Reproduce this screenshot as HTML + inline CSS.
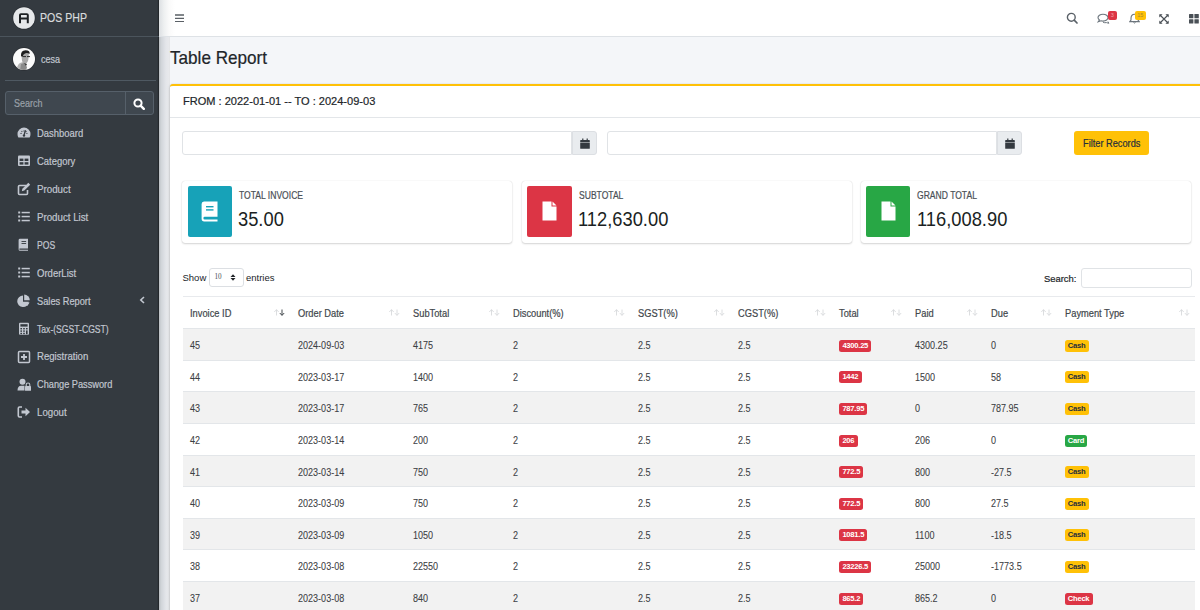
<!DOCTYPE html>
<html><head><meta charset="utf-8">
<style>
*{box-sizing:border-box;margin:0;padding:0}
html,body{width:1200px;height:610px;overflow:hidden;background:#f4f6f9;font-family:"Liberation Sans",sans-serif;color:#212529}
.abs{position:absolute}
.sx{display:inline-block;transform-origin:0 50%;white-space:nowrap;-webkit-text-stroke:.2px currentColor}
#sidebar{position:absolute;left:0;top:0;width:159px;height:610px;background:#343a40;z-index:5;box-shadow:inset -1.2px 0 0 #24282c}
#navbar{position:absolute;left:159px;top:0;width:1041px;height:37px;background:#fff;border-bottom:1px solid #dee2e6}
.brand{position:absolute;left:0;top:0;width:159px;height:37px;border-bottom:1px solid #4b545c}
.brand-text{position:absolute;left:39.5px;top:10.5px;font-size:12.6px;color:#d9dbdd}
.user{position:absolute;left:5px;top:37px;width:150.5px;height:44px;border-bottom:1px solid #4f5962}
.user-name{position:absolute;left:35.5px;top:15.5px;font-size:10.6px;color:#c2c7d0}
.nav .item{position:absolute;left:36.8px;font-size:10.6px;color:#c2c7d0;white-space:nowrap}
.nav svg{position:absolute}
.search{position:absolute;left:5px;top:91px;width:149px;height:23.5px;border:1px solid #56606a;border-radius:3px;background:#3f474f}
.search-in{position:absolute;left:7.5px;top:5px;font-size:10.6px;color:#9aa1a8}
.search-btn{position:absolute;left:119px;top:0;width:28px;height:22px;border-left:1px solid #56606a}
h1{position:absolute;left:170px;top:47px;font-size:18.5px;font-weight:400;color:#212529}
#card{position:absolute;left:170px;top:84px;width:1045px;height:540px;background:#fff;border-top:2.5px solid #ffc107;border-radius:3px;box-shadow:0 0 1px rgba(0,0,0,.125),0 1px 3px rgba(0,0,0,.2)}
#shade{position:absolute;left:159px;top:37px;width:11px;height:573px;background:linear-gradient(90deg,#b9bdc2 0,#d0d4d8 2px,#d8dbe0 4px,#e4e6ea 7px,#e8e9ec 10px,#e2e3e5 11px)}
#navshade{position:absolute;left:159px;top:0;width:16px;height:36px;background:linear-gradient(90deg,#dcdfe2,#eef0f1 5px,#fafafa 10px,#fff)}
.card-header{position:absolute;left:12.5px;top:8.7px;font-size:11.5px;color:#212529}
.hline{position:absolute;left:0;top:30.5px;width:100%;height:1px;background:#e3e6e9}
.inp{position:absolute;height:24px;background:#fff;border:1px solid #e0e3e6;border-radius:3px}
.addon{position:absolute;width:25.5px;height:24px;background:#e9ecef;border:1px solid #dcdfe3;border-radius:0 3px 3px 0}
.addon svg{position:absolute;left:7.5px;top:6px}
.btn{position:absolute;left:1074px;top:130.5px;width:75px;height:24.5px;background:#ffc107;border-radius:3px;font-size:10.2px;color:#1f2d3d;padding:7px 0 0 8.5px}
.ibox{position:absolute;top:180.5px;width:330px;height:62px;background:#fff;border-radius:3px;box-shadow:0 0 1px rgba(0,0,0,.18),0 1px 2px rgba(0,0,0,.16)}
.iicon{position:absolute;left:5.3px;top:5.3px;width:44.5px;height:51px;border-radius:2px}
.ilabel{position:absolute;left:56.5px;top:9.8px;font-size:10.2px;color:#4a5056}
.inum{position:absolute;left:56px;top:28.8px;font-size:19.3px;color:#1b1f23}
.dt-txt{position:absolute;font-size:9.5px;color:#212529}
.sel{position:absolute;left:208.5px;top:268.3px;width:35px;height:19px;border:1px solid #dcdfe3;border-radius:3px;background:#fff}
.th{position:absolute;font-size:10px;color:#42474c;white-space:nowrap}
.td{position:absolute;font-size:10.4px;color:#3c4044;white-space:nowrap}
.tr{position:absolute;left:182.5px;width:1012.5px;height:31.6px;border-top:1px solid #e3e6e9}
.badge{position:absolute;height:12px;padding:0 3.3px;border-radius:2.5px;font-size:7.6px;font-weight:700;line-height:12.2px;letter-spacing:-.25px;white-space:nowrap}
.badge-nav{font-size:5.5px;font-weight:400;text-align:center;line-height:9px;border-radius:2px}
</style></head><body>
<div id="sidebar">
  <div class="brand">
    <svg class="abs" style="left:12px;top:5.5px" width="24" height="24" viewBox="0 0 24 24">
      <circle cx="12" cy="12" r="11.6" fill="#24282d" opacity=".6"/>
      <circle cx="12" cy="12" r="10.8" fill="#e6e8ea"/>
      <path d="M7 17.3V9.1Q7 7.2 8.9 7.2H14.9Q16.8 7.2 16.8 9.1V17.3H14.8V13.4H9V17.3ZM9 11.6H14.8V9.1H9Z" fill="#1d2023"/>
    </svg>
    <div class="brand-text"><span class="sx" style="transform:scaleX(.84)">POS PHP</span></div>
  </div>
  <div class="user">
    <svg class="abs" style="left:7px;top:9.5px" width="24" height="24" viewBox="0 0 24 24">
      <defs><clipPath id="av"><circle cx="12" cy="12" r="11"/></clipPath></defs>
      <circle cx="12" cy="12" r="11.8" fill="#26292e" opacity=".7"/>
      <circle cx="12" cy="12" r="11" fill="#fbfbfb"/>
      <g clip-path="url(#av)">
        <path d="M4 24Q5 18 8 16L11 15L14 19L12 24Z" fill="#b5b5b5"/>
        <path d="M9.5 8Q9.5 4.5 13.5 4.5Q17 4.5 16.8 8.5L16.3 13Q15 17 12.5 17Q10 16 9.8 12Z" fill="#a8a8a8"/>
        <path d="M9 9Q8.5 3.5 13.5 3.2Q18.5 3.5 17.5 7Q15 5.5 13 6.5Q11 7 10.5 10Z" fill="#1e1e1e"/>
        <path d="M11 9.6H14M15 9.6H18" stroke="#2a2a2a" stroke-width="1"/>
        <path d="M8 24L9 17L12 16L15 20L14 24Z" fill="#8a8a8a"/>
        <path d="M12 16L14 19L15 17Z" fill="#333"/>
      </g>
    </svg>
    <div class="user-name"><span class="sx" style="transform:scaleX(.85)">cesa</span></div>
  </div>
  <div class="search">
    <div class="search-in"><span class="sx" style="transform:scaleX(.85)">Search</span></div>
    <div class="search-btn">
      <svg class="abs" style="left:7.3px;top:5.8px" width="12" height="12" viewBox="0 0 12 12"><circle cx="5" cy="5" r="3.6" fill="none" stroke="#fff" stroke-width="2"/><path d="M7.6 7.6L10.8 10.8" stroke="#fff" stroke-width="2.4" stroke-linecap="round"/></svg>
    </div>
  </div>
  <div class="nav">
    <svg style="left:17px;top:126.4px" width="14" height="14" viewBox="0 0 14 14"><path d="M7 1.5A6.5 6.5 0 0 0 0.5 8Q0.5 10 1.4 11.5H12.6Q13.5 10 13.5 8A6.5 6.5 0 0 0 7 1.5Z" fill="#c2c7d0"/><path d="M7 4.5V5.6M3.5 7.5H4.6M10.4 7.5H9.4M4.6 5.2L5.2 5.8M9.4 5.2L8.8 5.8" stroke="#343a40" stroke-width="1.1"/><path d="M8.5 4.2L7 9.2" stroke="#343a40" stroke-width="1.3"/><circle cx="7" cy="9.6" r="1.2" fill="#343a40"/></svg>
    <div class="item" style="top:127.2px"><span class="sx" style="transform:scaleX(0.890)">Dashboard</span></div>
    <svg style="left:17px;top:154.3px" width="14" height="14" viewBox="0 0 14 14"><rect x="1" y="1.5" width="12" height="10.5" rx="1" fill="#c2c7d0"/><rect x="2.6" y="4.6" width="3.8" height="2.4" fill="#343a40"/><rect x="7.6" y="4.6" width="3.8" height="2.4" fill="#343a40"/><rect x="2.6" y="8.2" width="3.8" height="2.4" fill="#343a40"/><rect x="7.6" y="8.2" width="3.8" height="2.4" fill="#343a40"/></svg>
    <div class="item" style="top:155.1px"><span class="sx" style="transform:scaleX(0.891)">Category</span></div>
    <svg style="left:17px;top:182.2px" width="14" height="14" viewBox="0 0 14 14"><path d="M9 3.5H2.5Q1.5 3.5 1.5 4.5V11.5Q1.5 12.5 2.5 12.5H9.5Q10.5 12.5 10.5 11.5V8" fill="none" stroke="#c2c7d0" stroke-width="1.6"/><path d="M11.3 0.8L13.2 2.7L7.3 8.6L4.8 9.2L5.4 6.7Z" fill="#c2c7d0"/></svg>
    <div class="item" style="top:183.0px"><span class="sx" style="transform:scaleX(0.921)">Product</span></div>
    <svg style="left:17px;top:210.1px" width="14" height="14" viewBox="0 0 14 14"><rect x="1.2" y="1.5" width="2" height="2" fill="#c2c7d0"/><rect x="1.2" y="5.5" width="2" height="2" fill="#c2c7d0"/><rect x="1.2" y="9.5" width="2" height="2" fill="#c2c7d0"/><rect x="4.6" y="1.8" width="8.2" height="1.5" fill="#c2c7d0"/><rect x="4.6" y="5.8" width="8.2" height="1.5" fill="#c2c7d0"/><rect x="4.6" y="9.8" width="8.2" height="1.5" fill="#c2c7d0"/></svg>
    <div class="item" style="top:210.9px"><span class="sx" style="transform:scaleX(0.916)">Product List</span></div>
    <svg style="left:17px;top:238.0px" width="14" height="14" viewBox="0 0 14 14"><path d="M3 0.8H11V10.4H3Q2.2 10.4 2.2 11.1Q2.2 11.8 3 11.8H11V12.8H3Q1.6 12.8 1.6 11.3V2.2Q1.6 0.8 3 0.8Z" fill="#c2c7d0"/><rect x="4.5" y="3" width="4.6" height=".9" fill="#343a40"/><rect x="4.5" y="5" width="4.6" height=".9" fill="#343a40"/></svg>
    <div class="item" style="top:238.8px"><span class="sx" style="transform:scaleX(0.812)">POS</span></div>
    <svg style="left:17px;top:265.9px" width="14" height="14" viewBox="0 0 14 14"><rect x="1.2" y="1.5" width="2" height="2" fill="#c2c7d0"/><rect x="1.2" y="5.5" width="2" height="2" fill="#c2c7d0"/><rect x="1.2" y="9.5" width="2" height="2" fill="#c2c7d0"/><rect x="4.6" y="1.8" width="8.2" height="1.5" fill="#c2c7d0"/><rect x="4.6" y="5.8" width="8.2" height="1.5" fill="#c2c7d0"/><rect x="4.6" y="9.8" width="8.2" height="1.5" fill="#c2c7d0"/></svg>
    <div class="item" style="top:266.7px"><span class="sx" style="transform:scaleX(0.900)">OrderList</span></div>
    <svg style="left:17px;top:293.8px" width="14" height="14" viewBox="0 0 14 14"><path d="M6 1.5A5.8 5.8 0 1 0 11.8 7.7H6Z" fill="#c2c7d0"/><path d="M7.2 0.5A5.8 5.8 0 0 1 12.8 6.2H7.2Z" fill="#c2c7d0"/><path d="M8 8.6H12.6L10.3 12Z" fill="#c2c7d0"/></svg>
    <div class="item" style="top:294.6px"><span class="sx" style="transform:scaleX(0.874)">Sales Report</span></div>
    <svg style="left:17px;top:321.7px" width="14" height="14" viewBox="0 0 14 14"><rect x="2" y="0.8" width="10" height="12" rx="1" fill="#c2c7d0"/><rect x="3.4" y="2.2" width="7.2" height="2.4" fill="#343a40"/><g fill="#343a40"><rect x="3.4" y="6" width="1.6" height="1.4"/><rect x="6.2" y="6" width="1.6" height="1.4"/><rect x="9" y="6" width="1.6" height="1.4"/><rect x="3.4" y="8.4" width="1.6" height="1.4"/><rect x="6.2" y="8.4" width="1.6" height="1.4"/><rect x="9" y="8.4" width="1.6" height="3.8"/><rect x="3.4" y="10.8" width="1.6" height="1.4"/><rect x="6.2" y="10.8" width="1.6" height="1.4"/></g></svg>
    <div class="item" style="top:322.5px"><span class="sx" style="transform:scaleX(0.812)">Tax-(SGST-CGST)</span></div>
    <svg style="left:17px;top:349.6px" width="14" height="14" viewBox="0 0 14 14"><rect x="1.5" y="1.5" width="11" height="11" rx="1" fill="none" stroke="#c2c7d0" stroke-width="1.5"/><path d="M7 4V10M4 7H10" stroke="#c2c7d0" stroke-width="1.8"/></svg>
    <div class="item" style="top:350.4px"><span class="sx" style="transform:scaleX(0.906)">Registration</span></div>
    <svg style="left:17px;top:377.5px" width="14" height="14" viewBox="0 0 14 14"><circle cx="5.5" cy="3.8" r="3" fill="#c2c7d0"/><path d="M0.5 12.5Q0.5 7.8 4.2 7.8H7.5V12.5Z" fill="#c2c7d0"/><rect x="8" y="8" width="6" height="4.8" rx=".6" fill="#c2c7d0"/><path d="M9.2 8.2V6.8Q9.2 5 11 5Q12.8 5 12.8 6.8V8.2" fill="none" stroke="#c2c7d0" stroke-width="1.1"/></svg>
    <div class="item" style="top:378.3px"><span class="sx" style="transform:scaleX(0.870)">Change Password</span></div>
    <svg style="left:17px;top:405.4px" width="14" height="14" viewBox="0 0 14 14"><path d="M5 2H2.5Q1.3 2 1.3 3.2V10.8Q1.3 12 2.5 12H5" fill="none" stroke="#c2c7d0" stroke-width="1.6"/><path d="M4.5 5.5H8.5V2.8L13 7L8.5 11.2V8.5H4.5Z" fill="#c2c7d0"/></svg>
    <div class="item" style="top:406.2px"><span class="sx" style="transform:scaleX(0.913)">Logout</span></div>
    <svg style="left:139px;top:296px" width="6" height="8" viewBox="0 0 6 8"><path d="M5 1L1.8 4L5 7" fill="none" stroke="#c2c7d0" stroke-width="1.6"/></svg>
  </div>
</div>
<div id="navbar">
  <svg class="abs" style="left:15.800000000000011px;top:14px" width="9" height="8" viewBox="0 0 9 8"><path d="M0 1H9M0 4.3H9M0 7.6H9" stroke="#5a6066" stroke-width="1.3"/></svg>
  <svg class="abs" style="left:907px;top:12px" width="12" height="12" viewBox="0 0 12 12"><circle cx="5.3" cy="5.3" r="3.9" fill="none" stroke="#5a6168" stroke-width="1.4"/><path d="M8.2 8.2L11 11" stroke="#5a6168" stroke-width="1.7" stroke-linecap="round"/></svg>
  <svg class="abs" style="left:938px;top:13px" width="13" height="11" viewBox="0 0 13 11"><path d="M6 1.2C3 1.2 1 2.8 1 4.6C1 5.6 1.6 6.4 2.4 7L1.2 8.8L4 7.8C4.6 8 5.3 8.1 6 8.1C9 8.1 11 6.5 11 4.6C11 2.8 9 1.2 6 1.2Z" fill="none" stroke="#6c757d" stroke-width="1.1"/><path d="M6 9.2Q7.5 10 9.5 9.6L11.8 10.3L11 8.6" fill="none" stroke="#6c757d" stroke-width="1"/></svg>
  <div class="abs badge-nav" style="left:949px;top:11px;width:8.5px;height:9px;background:#dc3545;color:#f0a0a8">3</div>
  <svg class="abs" style="left:970px;top:13px" width="11" height="11" viewBox="0 0 11 11"><path d="M5.5 1.2C3.2 1.2 2 3 2 5.2V7L0.8 8.6H10.2L9 7V5.2C9 3 7.8 1.2 5.5 1.2Z" fill="none" stroke="#6c757d" stroke-width="1.1"/><path d="M4.5 9.4Q5.5 10.6 6.5 9.4" stroke="#6c757d" stroke-width="1" fill="none"/></svg>
  <div class="abs badge-nav" style="left:975.5px;top:11px;width:11.5px;height:9px;background:#ffc107;color:#a88a30">15</div>
  <svg class="abs" style="left:999.5px;top:13.5px" width="10" height="10" viewBox="0 0 10 10"><path d="M1 1L9 9M9 1L1 9" stroke="#4a5056" stroke-width="1.1"/><path d="M0.3 0.3H3.6L0.3 3.6ZM9.7 0.3H6.4L9.7 3.6ZM0.3 9.7H3.6L0.3 6.4ZM9.7 9.7H6.4L9.7 6.4Z" fill="#4a5056"/></svg>
  <svg class="abs" style="left:1029.5px;top:14px" width="12" height="10" viewBox="0 0 12 10"><g fill="#4a5056"><rect x="0" y="0" width="4.4" height="4.3" rx=".5"/><rect x="5.4" y="0" width="4.4" height="4.3" rx=".5"/><rect x="0" y="5.3" width="4.4" height="4.3" rx=".5"/><rect x="5.4" y="5.3" width="4.4" height="4.3" rx=".5"/></g></svg>
</div>
<div id="navshade"></div>
<div id="shade"></div>
<h1><span class="sx" style="transform:scaleX(.925)">Table Report</span></h1>
<div id="card">
  <div class="card-header"><span class="sx" style="transform:scaleX(.96)">FROM : 2022-01-01 -- TO : 2024-09-03</span></div>
  <div class="hline"></div>
</div>
<div class="inp" style="left:182px;top:130.5px;width:390px;border-radius:3px 0 0 3px"></div>
<div class="addon" style="left:571.5px;top:130.5px"><svg width="10" height="11" viewBox="0 0 10 11"><path d="M2.2 0.6H3.4V2H6.6V0.6H7.8V2H9.2Q9.8 2 9.8 2.6V4H0.2V2.6Q0.2 2 0.8 2H2.2Z" fill="#343a40"/><path d="M0.2 4.6H9.8V10.2Q9.8 10.8 9.2 10.8H0.8Q0.2 10.8 0.2 10.2Z" fill="#343a40"/></svg></div>
<div class="inp" style="left:606.5px;top:130.5px;width:390px;border-radius:3px 0 0 3px"></div>
<div class="addon" style="left:996.5px;top:130.5px"><svg width="10" height="11" viewBox="0 0 10 11"><path d="M2.2 0.6H3.4V2H6.6V0.6H7.8V2H9.2Q9.8 2 9.8 2.6V4H0.2V2.6Q0.2 2 0.8 2H2.2Z" fill="#343a40"/><path d="M0.2 4.6H9.8V10.2Q9.8 10.8 9.2 10.8H0.8Q0.2 10.8 0.2 10.2Z" fill="#343a40"/></svg></div>
<div class="btn"><span class="sx" style="transform:scaleX(.905)">Filter Records</span></div>
<div class="ibox" style="left:182.3px">
  <div class="iicon" style="background:#17a2b8"><div class="abs" style="left:13px;top:15px"><svg width="18" height="21" viewBox="0 0 18 21"><path d="M3 0.5H16.5V15.8H3.6Q2.4 15.8 2.4 17.2Q2.4 18.6 3.6 18.6H16.5V20.5H3.2Q0.6 20.5 0.6 17.8V3Q0.6 0.5 3 0.5Z" fill="#fff"/><rect x="5" y="5" width="7.5" height="1.4" fill="#17a2b8"/><rect x="5" y="8.2" width="7.5" height="1.4" fill="#17a2b8"/><rect x="3" y="16.6" width="13.5" height="1.2" fill="#17a2b8"/></svg></div></div>
  <div class="ilabel"><span class="sx" style="transform:scaleX(.84)">TOTAL INVOICE</span></div>
  <div class="inum"><span class="sx" style="transform:scaleX(.95);-webkit-text-stroke:0">35.00</span></div>
</div>
<div class="ibox" style="left:522px">
  <div class="iicon" style="background:#dc3545"><div class="abs" style="left:15px;top:15.5px"><svg width="15" height="20" viewBox="0 0 15 20"><path d="M0.5 0.5H9.5V5.5H14.5V19.5H0.5Z" fill="#fff"/><path d="M10.5 0.5L14.5 4.5H10.5Z" fill="#fff"/></svg></div></div>
  <div class="ilabel"><span class="sx" style="transform:scaleX(.84)">SUBTOTAL</span></div>
  <div class="inum"><span class="sx" style="transform:scaleX(.95);-webkit-text-stroke:0">112,630.00</span></div>
</div>
<div class="ibox" style="left:860.5px">
  <div class="iicon" style="background:#28a745"><div class="abs" style="left:15px;top:15.5px"><svg width="15" height="20" viewBox="0 0 15 20"><path d="M0.5 0.5H9.5V5.5H14.5V19.5H0.5Z" fill="#fff"/><path d="M10.5 0.5L14.5 4.5H10.5Z" fill="#fff"/></svg></div></div>
  <div class="ilabel"><span class="sx" style="transform:scaleX(.84)">GRAND TOTAL</span></div>
  <div class="inum"><span class="sx" style="transform:scaleX(.95);-webkit-text-stroke:0">116,008.90</span></div>
</div>
<div class="dt-txt" style="left:182.5px;top:271.5px">Show</div>
<div class="sel"><span class="abs" style="left:5px;top:3.8px;font-family:'Liberation Serif',serif;font-size:7.2px;color:#495057">10</span>
<svg class="abs" style="left:20.8px;top:4.8px" width="6" height="7" viewBox="0 0 6 7"><path d="M0.5 3L3 0.3L5.5 3ZM0.5 4L3 6.7L5.5 4Z" fill="#212529"/></svg></div>
<div class="dt-txt" style="left:246px;top:271.5px">entries</div>
<div class="dt-txt" style="left:1044px;top:272.5px"><span class="sx" style="transform:scaleX(.99)">Search:</span></div>
<div class="inp" style="left:1080.5px;top:268px;width:111px;height:19.5px"></div>
<div id="tbl">
<div class="abs" style="left:182.5px;top:296.2px;width:1012.5px;height:1.3px;background:#e8eaed"></div>
<div class="th" style="left:190.0px;top:307.5px"><span class="sx" style="transform:scaleX(.93)">Invoice ID</span></div>
<svg class="abs" style="left:273.5px;top:308.5px" width="11" height="7" viewBox="0 0 11 7"><path d="M2.5 6.5V0.8M0.3 3L2.5 0.6L4.7 3" fill="none" stroke="#d3d5d8" stroke-width="0.8"/><path d="M8 0.5V6.2M5.8 4L8 6.4L10.2 4" fill="none" stroke="#3a3f44" stroke-width="0.95"/></svg>
<div class="th" style="left:297.5px;top:307.5px"><span class="sx" style="transform:scaleX(.93)">Order Date</span></div>
<svg class="abs" style="left:388.5px;top:308.5px" width="11" height="7" viewBox="0 0 11 7"><path d="M2.5 6.5V0.8M0.3 3L2.5 0.6L4.7 3" fill="none" stroke="#d3d5d8" stroke-width="0.8"/><path d="M8 0.5V6.2M5.8 4L8 6.4L10.2 4" fill="none" stroke="#d3d5d8" stroke-width="0.8"/></svg>
<div class="th" style="left:412.5px;top:307.5px"><span class="sx" style="transform:scaleX(.93)">SubTotal</span></div>
<svg class="abs" style="left:488.5px;top:308.5px" width="11" height="7" viewBox="0 0 11 7"><path d="M2.5 6.5V0.8M0.3 3L2.5 0.6L4.7 3" fill="none" stroke="#d3d5d8" stroke-width="0.8"/><path d="M8 0.5V6.2M5.8 4L8 6.4L10.2 4" fill="none" stroke="#d3d5d8" stroke-width="0.8"/></svg>
<div class="th" style="left:512.5px;top:307.5px"><span class="sx" style="transform:scaleX(.93)">Discount(%)</span></div>
<svg class="abs" style="left:613.5px;top:308.5px" width="11" height="7" viewBox="0 0 11 7"><path d="M2.5 6.5V0.8M0.3 3L2.5 0.6L4.7 3" fill="none" stroke="#d3d5d8" stroke-width="0.8"/><path d="M8 0.5V6.2M5.8 4L8 6.4L10.2 4" fill="none" stroke="#d3d5d8" stroke-width="0.8"/></svg>
<div class="th" style="left:637.5px;top:307.5px"><span class="sx" style="transform:scaleX(.93)">SGST(%)</span></div>
<svg class="abs" style="left:713.5px;top:308.5px" width="11" height="7" viewBox="0 0 11 7"><path d="M2.5 6.5V0.8M0.3 3L2.5 0.6L4.7 3" fill="none" stroke="#d3d5d8" stroke-width="0.8"/><path d="M8 0.5V6.2M5.8 4L8 6.4L10.2 4" fill="none" stroke="#d3d5d8" stroke-width="0.8"/></svg>
<div class="th" style="left:737.5px;top:307.5px"><span class="sx" style="transform:scaleX(.93)">CGST(%)</span></div>
<svg class="abs" style="left:814.5px;top:308.5px" width="11" height="7" viewBox="0 0 11 7"><path d="M2.5 6.5V0.8M0.3 3L2.5 0.6L4.7 3" fill="none" stroke="#d3d5d8" stroke-width="0.8"/><path d="M8 0.5V6.2M5.8 4L8 6.4L10.2 4" fill="none" stroke="#d3d5d8" stroke-width="0.8"/></svg>
<div class="th" style="left:838.5px;top:307.5px"><span class="sx" style="transform:scaleX(.93)">Total</span></div>
<svg class="abs" style="left:890.5px;top:308.5px" width="11" height="7" viewBox="0 0 11 7"><path d="M2.5 6.5V0.8M0.3 3L2.5 0.6L4.7 3" fill="none" stroke="#d3d5d8" stroke-width="0.8"/><path d="M8 0.5V6.2M5.8 4L8 6.4L10.2 4" fill="none" stroke="#d3d5d8" stroke-width="0.8"/></svg>
<div class="th" style="left:914.5px;top:307.5px"><span class="sx" style="transform:scaleX(.93)">Paid</span></div>
<svg class="abs" style="left:966.5px;top:308.5px" width="11" height="7" viewBox="0 0 11 7"><path d="M2.5 6.5V0.8M0.3 3L2.5 0.6L4.7 3" fill="none" stroke="#d3d5d8" stroke-width="0.8"/><path d="M8 0.5V6.2M5.8 4L8 6.4L10.2 4" fill="none" stroke="#d3d5d8" stroke-width="0.8"/></svg>
<div class="th" style="left:990.5px;top:307.5px"><span class="sx" style="transform:scaleX(.93)">Due</span></div>
<svg class="abs" style="left:1040.5px;top:308.5px" width="11" height="7" viewBox="0 0 11 7"><path d="M2.5 6.5V0.8M0.3 3L2.5 0.6L4.7 3" fill="none" stroke="#d3d5d8" stroke-width="0.8"/><path d="M8 0.5V6.2M5.8 4L8 6.4L10.2 4" fill="none" stroke="#d3d5d8" stroke-width="0.8"/></svg>
<div class="th" style="left:1064.5px;top:307.5px"><span class="sx" style="transform:scaleX(.93)">Payment Type</span></div>
<svg class="abs" style="left:1178.5px;top:308.5px" width="11" height="7" viewBox="0 0 11 7"><path d="M2.5 6.5V0.8M0.3 3L2.5 0.6L4.7 3" fill="none" stroke="#d3d5d8" stroke-width="0.8"/><path d="M8 0.5V6.2M5.8 4L8 6.4L10.2 4" fill="none" stroke="#d3d5d8" stroke-width="0.8"/></svg>
<div class="tr" style="top:328.2px;background:#f2f2f2"></div>
<div class="td" style="left:190.0px;top:340.1px"><span class="sx" style="transform:scaleX(.87);-webkit-text-stroke:.08px currentColor">45</span></div>
<div class="td" style="left:297.5px;top:340.1px"><span class="sx" style="transform:scaleX(.87);-webkit-text-stroke:.08px currentColor">2024-09-03</span></div>
<div class="td" style="left:412.5px;top:340.1px"><span class="sx" style="transform:scaleX(.87);-webkit-text-stroke:.08px currentColor">4175</span></div>
<div class="td" style="left:512.5px;top:340.1px"><span class="sx" style="transform:scaleX(.87);-webkit-text-stroke:.08px currentColor">2</span></div>
<div class="td" style="left:637.5px;top:340.1px"><span class="sx" style="transform:scaleX(.87);-webkit-text-stroke:.08px currentColor">2.5</span></div>
<div class="td" style="left:737.5px;top:340.1px"><span class="sx" style="transform:scaleX(.87);-webkit-text-stroke:.08px currentColor">2.5</span></div>
<div class="badge" style="left:839.1px;top:339.8px;background:#dc3545;color:#fff">4300.25</div>
<div class="td" style="left:914.5px;top:340.1px"><span class="sx" style="transform:scaleX(.87);-webkit-text-stroke:.08px currentColor">4300.25</span></div>
<div class="td" style="left:990.5px;top:340.1px"><span class="sx" style="transform:scaleX(.87);-webkit-text-stroke:.08px currentColor">0</span></div>
<div class="badge" style="left:1064.5px;top:339.8px;background:#ffc107;color:#1f2d3d">Cash</div>
<div class="tr" style="top:359.8px;background:#fff"></div>
<div class="td" style="left:190.0px;top:371.7px"><span class="sx" style="transform:scaleX(.87);-webkit-text-stroke:.08px currentColor">44</span></div>
<div class="td" style="left:297.5px;top:371.7px"><span class="sx" style="transform:scaleX(.87);-webkit-text-stroke:.08px currentColor">2023-03-17</span></div>
<div class="td" style="left:412.5px;top:371.7px"><span class="sx" style="transform:scaleX(.87);-webkit-text-stroke:.08px currentColor">1400</span></div>
<div class="td" style="left:512.5px;top:371.7px"><span class="sx" style="transform:scaleX(.87);-webkit-text-stroke:.08px currentColor">2</span></div>
<div class="td" style="left:637.5px;top:371.7px"><span class="sx" style="transform:scaleX(.87);-webkit-text-stroke:.08px currentColor">2.5</span></div>
<div class="td" style="left:737.5px;top:371.7px"><span class="sx" style="transform:scaleX(.87);-webkit-text-stroke:.08px currentColor">2.5</span></div>
<div class="badge" style="left:839.1px;top:371.4px;background:#dc3545;color:#fff">1442</div>
<div class="td" style="left:914.5px;top:371.7px"><span class="sx" style="transform:scaleX(.87);-webkit-text-stroke:.08px currentColor">1500</span></div>
<div class="td" style="left:990.5px;top:371.7px"><span class="sx" style="transform:scaleX(.87);-webkit-text-stroke:.08px currentColor">58</span></div>
<div class="badge" style="left:1064.5px;top:371.4px;background:#ffc107;color:#1f2d3d">Cash</div>
<div class="tr" style="top:391.4px;background:#f2f2f2"></div>
<div class="td" style="left:190.0px;top:403.3px"><span class="sx" style="transform:scaleX(.87);-webkit-text-stroke:.08px currentColor">43</span></div>
<div class="td" style="left:297.5px;top:403.3px"><span class="sx" style="transform:scaleX(.87);-webkit-text-stroke:.08px currentColor">2023-03-17</span></div>
<div class="td" style="left:412.5px;top:403.3px"><span class="sx" style="transform:scaleX(.87);-webkit-text-stroke:.08px currentColor">765</span></div>
<div class="td" style="left:512.5px;top:403.3px"><span class="sx" style="transform:scaleX(.87);-webkit-text-stroke:.08px currentColor">2</span></div>
<div class="td" style="left:637.5px;top:403.3px"><span class="sx" style="transform:scaleX(.87);-webkit-text-stroke:.08px currentColor">2.5</span></div>
<div class="td" style="left:737.5px;top:403.3px"><span class="sx" style="transform:scaleX(.87);-webkit-text-stroke:.08px currentColor">2.5</span></div>
<div class="badge" style="left:839.1px;top:403.0px;background:#dc3545;color:#fff">787.95</div>
<div class="td" style="left:914.5px;top:403.3px"><span class="sx" style="transform:scaleX(.87);-webkit-text-stroke:.08px currentColor">0</span></div>
<div class="td" style="left:990.5px;top:403.3px"><span class="sx" style="transform:scaleX(.87);-webkit-text-stroke:.08px currentColor">787.95</span></div>
<div class="badge" style="left:1064.5px;top:403.0px;background:#ffc107;color:#1f2d3d">Cash</div>
<div class="tr" style="top:423.0px;background:#fff"></div>
<div class="td" style="left:190.0px;top:434.9px"><span class="sx" style="transform:scaleX(.87);-webkit-text-stroke:.08px currentColor">42</span></div>
<div class="td" style="left:297.5px;top:434.9px"><span class="sx" style="transform:scaleX(.87);-webkit-text-stroke:.08px currentColor">2023-03-14</span></div>
<div class="td" style="left:412.5px;top:434.9px"><span class="sx" style="transform:scaleX(.87);-webkit-text-stroke:.08px currentColor">200</span></div>
<div class="td" style="left:512.5px;top:434.9px"><span class="sx" style="transform:scaleX(.87);-webkit-text-stroke:.08px currentColor">2</span></div>
<div class="td" style="left:637.5px;top:434.9px"><span class="sx" style="transform:scaleX(.87);-webkit-text-stroke:.08px currentColor">2.5</span></div>
<div class="td" style="left:737.5px;top:434.9px"><span class="sx" style="transform:scaleX(.87);-webkit-text-stroke:.08px currentColor">2.5</span></div>
<div class="badge" style="left:839.1px;top:434.6px;background:#dc3545;color:#fff">206</div>
<div class="td" style="left:914.5px;top:434.9px"><span class="sx" style="transform:scaleX(.87);-webkit-text-stroke:.08px currentColor">206</span></div>
<div class="td" style="left:990.5px;top:434.9px"><span class="sx" style="transform:scaleX(.87);-webkit-text-stroke:.08px currentColor">0</span></div>
<div class="badge" style="left:1064.5px;top:434.6px;background:#28a745;color:#fff">Card</div>
<div class="tr" style="top:454.6px;background:#f2f2f2"></div>
<div class="td" style="left:190.0px;top:466.5px"><span class="sx" style="transform:scaleX(.87);-webkit-text-stroke:.08px currentColor">41</span></div>
<div class="td" style="left:297.5px;top:466.5px"><span class="sx" style="transform:scaleX(.87);-webkit-text-stroke:.08px currentColor">2023-03-14</span></div>
<div class="td" style="left:412.5px;top:466.5px"><span class="sx" style="transform:scaleX(.87);-webkit-text-stroke:.08px currentColor">750</span></div>
<div class="td" style="left:512.5px;top:466.5px"><span class="sx" style="transform:scaleX(.87);-webkit-text-stroke:.08px currentColor">2</span></div>
<div class="td" style="left:637.5px;top:466.5px"><span class="sx" style="transform:scaleX(.87);-webkit-text-stroke:.08px currentColor">2.5</span></div>
<div class="td" style="left:737.5px;top:466.5px"><span class="sx" style="transform:scaleX(.87);-webkit-text-stroke:.08px currentColor">2.5</span></div>
<div class="badge" style="left:839.1px;top:466.2px;background:#dc3545;color:#fff">772.5</div>
<div class="td" style="left:914.5px;top:466.5px"><span class="sx" style="transform:scaleX(.87);-webkit-text-stroke:.08px currentColor">800</span></div>
<div class="td" style="left:990.5px;top:466.5px"><span class="sx" style="transform:scaleX(.87);-webkit-text-stroke:.08px currentColor">-27.5</span></div>
<div class="badge" style="left:1064.5px;top:466.2px;background:#ffc107;color:#1f2d3d">Cash</div>
<div class="tr" style="top:486.2px;background:#fff"></div>
<div class="td" style="left:190.0px;top:498.1px"><span class="sx" style="transform:scaleX(.87);-webkit-text-stroke:.08px currentColor">40</span></div>
<div class="td" style="left:297.5px;top:498.1px"><span class="sx" style="transform:scaleX(.87);-webkit-text-stroke:.08px currentColor">2023-03-09</span></div>
<div class="td" style="left:412.5px;top:498.1px"><span class="sx" style="transform:scaleX(.87);-webkit-text-stroke:.08px currentColor">750</span></div>
<div class="td" style="left:512.5px;top:498.1px"><span class="sx" style="transform:scaleX(.87);-webkit-text-stroke:.08px currentColor">2</span></div>
<div class="td" style="left:637.5px;top:498.1px"><span class="sx" style="transform:scaleX(.87);-webkit-text-stroke:.08px currentColor">2.5</span></div>
<div class="td" style="left:737.5px;top:498.1px"><span class="sx" style="transform:scaleX(.87);-webkit-text-stroke:.08px currentColor">2.5</span></div>
<div class="badge" style="left:839.1px;top:497.8px;background:#dc3545;color:#fff">772.5</div>
<div class="td" style="left:914.5px;top:498.1px"><span class="sx" style="transform:scaleX(.87);-webkit-text-stroke:.08px currentColor">800</span></div>
<div class="td" style="left:990.5px;top:498.1px"><span class="sx" style="transform:scaleX(.87);-webkit-text-stroke:.08px currentColor">27.5</span></div>
<div class="badge" style="left:1064.5px;top:497.8px;background:#ffc107;color:#1f2d3d">Cash</div>
<div class="tr" style="top:517.8px;background:#f2f2f2"></div>
<div class="td" style="left:190.0px;top:529.7px"><span class="sx" style="transform:scaleX(.87);-webkit-text-stroke:.08px currentColor">39</span></div>
<div class="td" style="left:297.5px;top:529.7px"><span class="sx" style="transform:scaleX(.87);-webkit-text-stroke:.08px currentColor">2023-03-09</span></div>
<div class="td" style="left:412.5px;top:529.7px"><span class="sx" style="transform:scaleX(.87);-webkit-text-stroke:.08px currentColor">1050</span></div>
<div class="td" style="left:512.5px;top:529.7px"><span class="sx" style="transform:scaleX(.87);-webkit-text-stroke:.08px currentColor">2</span></div>
<div class="td" style="left:637.5px;top:529.7px"><span class="sx" style="transform:scaleX(.87);-webkit-text-stroke:.08px currentColor">2.5</span></div>
<div class="td" style="left:737.5px;top:529.7px"><span class="sx" style="transform:scaleX(.87);-webkit-text-stroke:.08px currentColor">2.5</span></div>
<div class="badge" style="left:839.1px;top:529.4px;background:#dc3545;color:#fff">1081.5</div>
<div class="td" style="left:914.5px;top:529.7px"><span class="sx" style="transform:scaleX(.87);-webkit-text-stroke:.08px currentColor">1100</span></div>
<div class="td" style="left:990.5px;top:529.7px"><span class="sx" style="transform:scaleX(.87);-webkit-text-stroke:.08px currentColor">-18.5</span></div>
<div class="badge" style="left:1064.5px;top:529.4px;background:#ffc107;color:#1f2d3d">Cash</div>
<div class="tr" style="top:549.4px;background:#fff"></div>
<div class="td" style="left:190.0px;top:561.3px"><span class="sx" style="transform:scaleX(.87);-webkit-text-stroke:.08px currentColor">38</span></div>
<div class="td" style="left:297.5px;top:561.3px"><span class="sx" style="transform:scaleX(.87);-webkit-text-stroke:.08px currentColor">2023-03-08</span></div>
<div class="td" style="left:412.5px;top:561.3px"><span class="sx" style="transform:scaleX(.87);-webkit-text-stroke:.08px currentColor">22550</span></div>
<div class="td" style="left:512.5px;top:561.3px"><span class="sx" style="transform:scaleX(.87);-webkit-text-stroke:.08px currentColor">2</span></div>
<div class="td" style="left:637.5px;top:561.3px"><span class="sx" style="transform:scaleX(.87);-webkit-text-stroke:.08px currentColor">2.5</span></div>
<div class="td" style="left:737.5px;top:561.3px"><span class="sx" style="transform:scaleX(.87);-webkit-text-stroke:.08px currentColor">2.5</span></div>
<div class="badge" style="left:839.1px;top:561.0px;background:#dc3545;color:#fff">23226.5</div>
<div class="td" style="left:914.5px;top:561.3px"><span class="sx" style="transform:scaleX(.87);-webkit-text-stroke:.08px currentColor">25000</span></div>
<div class="td" style="left:990.5px;top:561.3px"><span class="sx" style="transform:scaleX(.87);-webkit-text-stroke:.08px currentColor">-1773.5</span></div>
<div class="badge" style="left:1064.5px;top:561.0px;background:#ffc107;color:#1f2d3d">Cash</div>
<div class="tr" style="top:581.0px;background:#f2f2f2"></div>
<div class="td" style="left:190.0px;top:592.9px"><span class="sx" style="transform:scaleX(.87);-webkit-text-stroke:.08px currentColor">37</span></div>
<div class="td" style="left:297.5px;top:592.9px"><span class="sx" style="transform:scaleX(.87);-webkit-text-stroke:.08px currentColor">2023-03-08</span></div>
<div class="td" style="left:412.5px;top:592.9px"><span class="sx" style="transform:scaleX(.87);-webkit-text-stroke:.08px currentColor">840</span></div>
<div class="td" style="left:512.5px;top:592.9px"><span class="sx" style="transform:scaleX(.87);-webkit-text-stroke:.08px currentColor">2</span></div>
<div class="td" style="left:637.5px;top:592.9px"><span class="sx" style="transform:scaleX(.87);-webkit-text-stroke:.08px currentColor">2.5</span></div>
<div class="td" style="left:737.5px;top:592.9px"><span class="sx" style="transform:scaleX(.87);-webkit-text-stroke:.08px currentColor">2.5</span></div>
<div class="badge" style="left:839.1px;top:592.6px;background:#dc3545;color:#fff">865.2</div>
<div class="td" style="left:914.5px;top:592.9px"><span class="sx" style="transform:scaleX(.87);-webkit-text-stroke:.08px currentColor">865.2</span></div>
<div class="td" style="left:990.5px;top:592.9px"><span class="sx" style="transform:scaleX(.87);-webkit-text-stroke:.08px currentColor">0</span></div>
<div class="badge" style="left:1064.5px;top:592.6px;background:#dc3545;color:#fff">Check</div>
</div>
</body></html>
